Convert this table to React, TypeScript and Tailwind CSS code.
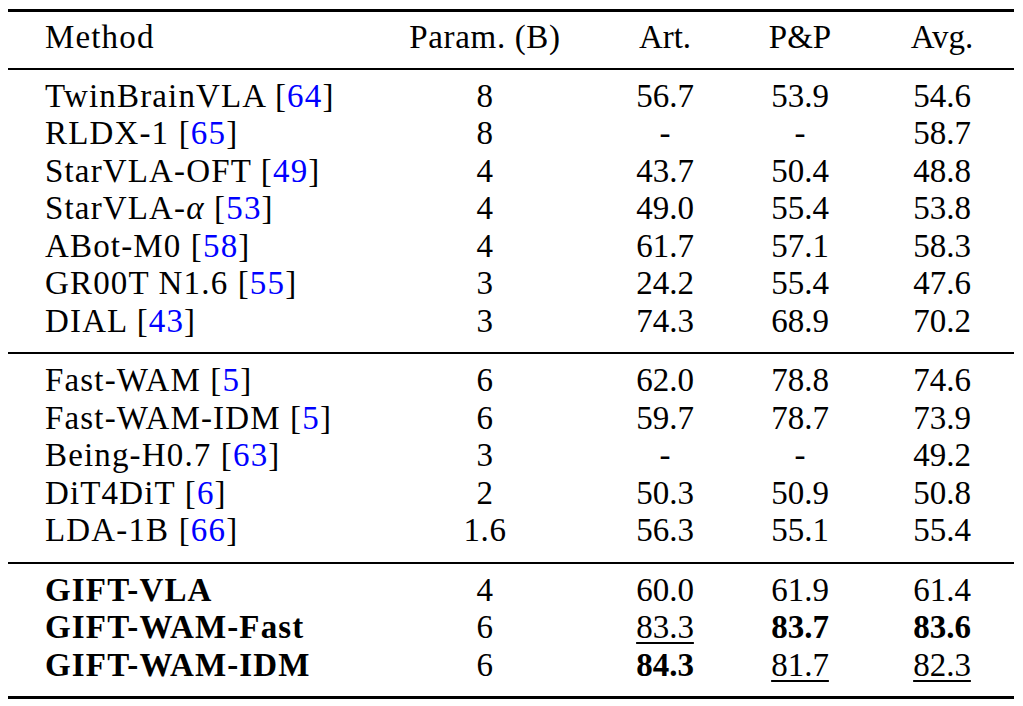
import React from 'react';

type Cell = { v: string; b?: boolean; u?: boolean };
type Row = { name: React.ReactNode; cite?: string; bold?: boolean; p: string; vals: Cell[] };

const c = (v: string, b = false, u = false): Cell => ({ v, b, u });

const groupA: Row[] = [
  { name: 'TwinBrainVLA', cite: '64', p: '8', vals: [c('56.7'), c('53.9'), c('54.6')] },
  { name: 'RLDX-1', cite: '65', p: '8', vals: [c('-'), c('-'), c('58.7')] },
  { name: 'StarVLA-OFT', cite: '49', p: '4', vals: [c('43.7'), c('50.4'), c('48.8')] },
  { name: <>StarVLA-<i>α</i></>, cite: '53', p: '4', vals: [c('49.0'), c('55.4'), c('53.8')] },
  { name: 'ABot-M0', cite: '58', p: '4', vals: [c('61.7'), c('57.1'), c('58.3')] },
  { name: 'GR00T N1.6', cite: '55', p: '3', vals: [c('24.2'), c('55.4'), c('47.6')] },
  { name: 'DIAL', cite: '43', p: '3', vals: [c('74.3'), c('68.9'), c('70.2')] },
];

const groupB: Row[] = [
  { name: 'Fast-WAM', cite: '5', p: '6', vals: [c('62.0'), c('78.8'), c('74.6')] },
  { name: 'Fast-WAM-IDM', cite: '5', p: '6', vals: [c('59.7'), c('78.7'), c('73.9')] },
  { name: 'Being-H0.7', cite: '63', p: '3', vals: [c('-'), c('-'), c('49.2')] },
  { name: 'DiT4DiT', cite: '6', p: '2', vals: [c('50.3'), c('50.9'), c('50.8')] },
  { name: 'LDA-1B', cite: '66', p: '1.6', vals: [c('56.3'), c('55.1'), c('55.4')] },
];

const groupC: Row[] = [
  { name: 'GIFT-VLA', bold: true, p: '4', vals: [c('60.0'), c('61.9'), c('61.4')] },
  { name: 'GIFT-WAM-Fast', bold: true, p: '6', vals: [c('83.3', false, true), c('83.7', true), c('83.6', true)] },
  { name: 'GIFT-WAM-IDM', bold: true, p: '6', vals: [c('84.3', true), c('81.7', false, true), c('82.3', false, true)] },
];

const Line = ({ thick }: { thick?: boolean }) => (
  <div className={thick ? 'h-[3px] bg-black' : 'h-[2px] bg-black'} />
);

const Val = ({ cell }: { cell: Cell }) => (
  <span className={`${cell.b ? 'font-bold' : ''} ${cell.u ? 'underline decoration-[1.5px] underline-offset-[4px]' : ''}`}>
    {cell.v}
  </span>
);

const Cols = ({ first, p, vals }: { first: React.ReactNode; p: React.ReactNode; vals: React.ReactNode[] }) => (
  <div className="flex items-center h-[37.5px] leading-[37.5px]">
    <div className="w-[400px] pl-[37px] tracking-[0.035em] whitespace-nowrap">{first}</div>
    <div className="w-[154px] text-center whitespace-nowrap tracking-[0.02em]">{p}</div>
    <div className="ml-[43px] w-[120px] text-center">{vals[0]}</div>
    <div className="ml-[15px] w-[120px] text-center whitespace-nowrap">{vals[1]}</div>
    <div className="ml-[22px] w-[120px] text-center">{vals[2]}</div>
  </div>
);

const Group = ({ rows }: { rows: Row[] }) => (
  <div className="pt-[8px] pb-[12px]">
    {rows.map((r, i) => (
      <Cols
        key={i}
        first={
          <span className={r.bold ? 'font-bold tracking-[0.035em]' : ''}>
            {r.name}
            {r.cite && (
              <>
                {' '}[<span className="text-[#0000ff]">{r.cite}</span>]
              </>
            )}
          </span>
        }
        p={r.p}
        vals={r.vals.map((v, j) => <Val key={j} cell={v} />)}
      />
    ))}
  </div>
);

export default function App() {
  return (
    <div className="min-h-screen bg-white text-black font-['Liberation_Serif',serif] text-[33px]">
      <div className="ml-[8px] w-[1006px] pt-[9px]">
        <Line thick />
        <div className="pt-[7px] pb-[11px]">
          <Cols first="Method" p="Param. (B)" vals={['Art.', 'P&P', 'Avg.']} />
        </div>
        <Line />
        <Group rows={groupA} />
        <Line />
        <Group rows={groupB} />
        <Line />
        <Group rows={groupC} />
        <Line thick />
      </div>
    </div>
  );
}
